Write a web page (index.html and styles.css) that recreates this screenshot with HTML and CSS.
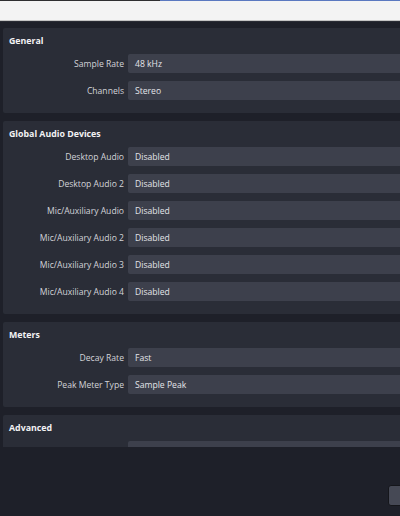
FILE: index.html
```html
<!DOCTYPE html>
<html>
<head>
<meta charset="utf-8">
<link rel="stylesheet" href="styles.css">
</head>
<body>
<div class="topline"></div>
<div class="searchbar"></div>
<div class="scroll">
  <section class="group">
    <div class="title">General</div>
    <div class="rows">
      <div class="label">Sample Rate</div><div class="combo">48 kHz</div>
      <div class="label">Channels</div><div class="combo">Stereo</div>
    </div>
  </section>
  <section class="group">
    <div class="title">Global Audio Devices</div>
    <div class="rows">
      <div class="label">Desktop Audio</div><div class="combo">Disabled</div>
      <div class="label">Desktop Audio 2</div><div class="combo">Disabled</div>
      <div class="label">Mic/Auxiliary Audio</div><div class="combo">Disabled</div>
      <div class="label">Mic/Auxiliary Audio 2</div><div class="combo">Disabled</div>
      <div class="label">Mic/Auxiliary Audio 3</div><div class="combo">Disabled</div>
      <div class="label">Mic/Auxiliary Audio 4</div><div class="combo">Disabled</div>
    </div>
  </section>
  <section class="group">
    <div class="title">Meters</div>
    <div class="rows">
      <div class="label">Decay Rate</div><div class="combo">Fast</div>
      <div class="label">Peak Meter Type</div><div class="combo">Sample Peak</div>
    </div>
  </section>
  <section class="group">
    <div class="title">Advanced</div>
    <div class="rows">
      <div class="label">Monitoring Device</div><div class="combo">Default</div>
    </div>
  </section>
</div>
<div class="footer">
  <div class="btn"></div>
</div>
</body>
</html>
```

FILE: styles.css
```css
html, body {
  margin: 0;
  padding: 0;
}
body {
  width: 400px;
  height: 516px;
  overflow: hidden;
  background: #1e2029;
  font-family: "Open Sans", "Noto Sans", sans-serif;
  font-size: 8.6px;
  color: #d6d7dc;
}
.topline {
  height: 1px;
  background: linear-gradient(to right, #2e2e30 0, #2e2e30 160px, #5a78c0 160px, #5a78c0 100%);
}
.searchbar {
  height: 19px;
  background: #f3f3f3;
  border-bottom: 1px solid #c4c4c4;
}
.scroll {
  height: 426px;
  overflow: hidden;
  padding: 6px 0 0 3px;
  box-sizing: border-box;
  border-top: 1px solid #2a2c34;
}
.group {
  background: #2a2d37;
  margin: 0 -10px 8px 0;
  padding: 6px 0 13px;
  border-radius: 2px;
}
.title {
  height: 14px;
  line-height: 15px;
  margin: 0 0 6px 6px;
  font-weight: 700;
  font-size: 8.8px;
  color: #f2f2f4;
}
.rows {
  display: grid;
  grid-template-columns: 121px 1fr;
  column-gap: 4px;
  row-gap: 8px;
}
.label {
  text-align: right;
  line-height: 21px;
  height: 19px;
  white-space: nowrap;
  color: #d3d4d9;
}
.combo {
  height: 19px;
  line-height: 21px;
  background: #3d404c;
  padding-left: 7px;
  color: #e4e5ea;
  border-radius: 2px 0 0 2px;
}
.footer {
  height: 69px;
  display: flex;
  justify-content: flex-end;
  align-items: flex-start;
  padding-top: 38px;
  box-sizing: border-box;
}
.btn {
  width: 20px;
  height: 19px;
  margin-right: -10px;
  background: #464955;
  border: 1px solid #15161b;
  border-radius: 3px;
}
```
